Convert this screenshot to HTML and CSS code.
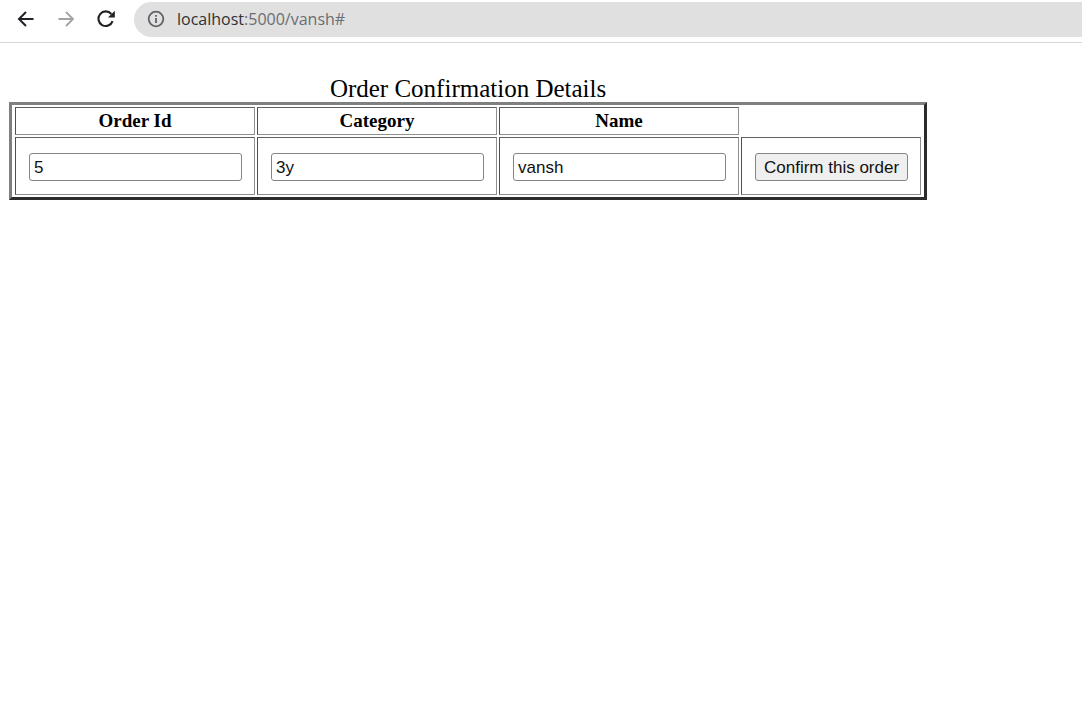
FILE: index.html
```html
<!DOCTYPE html>
<html lang="en">
<head>
<meta charset="utf-8">
<title>Order Confirmation</title>
<link rel="stylesheet" href="styles.css">
</head>
<body>
<header class="toolbar">
  <button class="nav" type="button" aria-label="Back"><svg viewBox="0 0 20 20"><path d="M17.500 10H3M10 3 3 10l7 7" fill="none" stroke="#202124" stroke-width="2"/></svg></button>
  <button class="nav" type="button" aria-label="Forward"><svg viewBox="0 0 20 20"><path d="M2.500 10H17M10 3l7 7-7 7" fill="none" stroke="#a3a3a3" stroke-width="1.800"/></svg></button>
  <button class="nav" type="button" aria-label="Reload"><svg viewBox="0 0 20 20"><path d="M16.600 12.200A7.300 7.300 0 1 1 15.300 5" fill="none" stroke="#202124" stroke-width="2.100"/><path d="M18.800 1.800V8.600H12z" fill="#202124"/></svg></button>
  <div class="address">
    <svg class="info" viewBox="0 0 18 18"><circle cx="9" cy="9" r="7.300" fill="none" stroke="#5f6368" stroke-width="1.800"/><path d="M9 8v5M9 5v1.800" stroke="#5f6368" stroke-width="1.800"/></svg>
    <div class="url" role="textbox" aria-label="Address" contenteditable="true" spellcheck="false"><span class="host">localhost</span>:5000/vansh#</div>
  </div>
</header>
<main class="page">
  <table class="orders">
    <caption>Order Confirmation Details</caption>
    <thead>
      <tr><th id="c1">Order Id</th><th id="c2">Category</th><th id="c3">Name</th></tr>
    </thead>
    <tbody>
      <tr>
        <td><input class="field" type="text" value="5" aria-labelledby="c1"></td>
        <td><input class="field" type="text" value="3y" aria-labelledby="c2"></td>
        <td><input class="field" type="text" value="vansh" aria-labelledby="c3"></td>
        <td><button class="confirm" type="button">Confirm this order</button></td>
      </tr>
    </tbody>
  </table>
</main>
</body>
</html>
```

FILE: styles.css
```css
* { box-sizing: border-box; }
body { margin: 0; background: #fff; color: #000; font-family: "Liberation Serif", serif; }
.toolbar { display: flex; align-items: center; gap: 20px; height: 43px; padding: 0 0 4px 16px; border-bottom: 1px solid #d6d6d6; }
.nav { flex: none; display: block; width: 20px; height: 20px; padding: 0; border: 0; background: none; }
.nav svg { display: block; width: 20px; height: 20px; }
.address { flex: 1; display: flex; align-items: center; gap: 12px; height: 35px; margin-left: -2px; padding-left: 13px; border-radius: 18px 0 0 18px; background: #e0e0e0; }
.info { flex: none; width: 18px; height: 18px; }
.url { flex: 1; font: 16px/24px "Open Sans", sans-serif; color: #6b6d70; outline: 0; white-space: nowrap; }
.host { color: #303134; }
.page { padding: 32px 9px; }
.orders { padding: 0 1px; border: 3px solid; border-color: #808080 #2c2c2c #2c2c2c #808080; border-spacing: 2px; }
.orders caption { font-size: 25px; line-height: 27px; }
.orders th, .orders td { border: 1px solid; border-color: #606060 #909090 #909090 #505050; }
.orders th { padding: 2px; font-size: 19px; line-height: 22px; }
.orders td { padding: 15px 12px 13px 13px; }
.field, .confirm { display: block; height: 28px; border: 1px solid #858585; border-radius: 3px; font: 17px/20px "Liberation Sans", sans-serif; color: #111; }
.field { width: 213px; padding: 2px 4px 0; background: #fff; }
.confirm { padding: 1px 8px 0; background: #efefef; white-space: nowrap; }
```
